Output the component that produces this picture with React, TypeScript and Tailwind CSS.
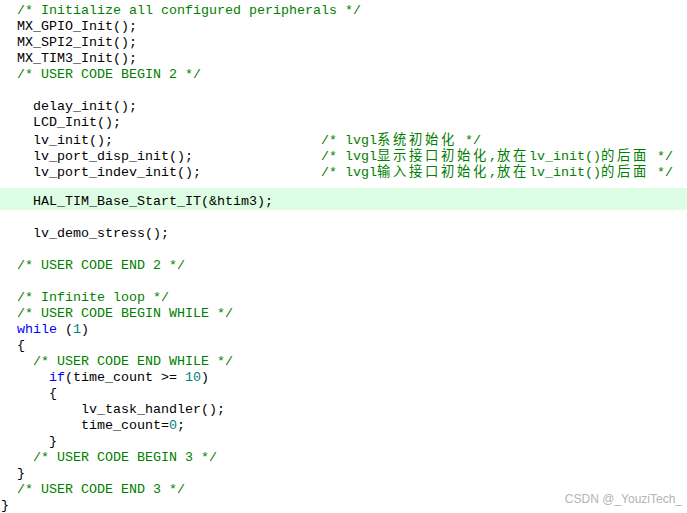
import React from "react";

type Seg = [string, "t" | "c" | "k" | "n"];

const cls: Record<string, string> = {
  t: "text-black",
  c: "text-[#008000]",
  k: "text-[#0000ff]",
  n: "text-[#008080]",
};

function renderText(s: string, key: string) {
  const parts = s.split(/([\u4e00-\u9fff]+)/);
  return parts.map((p, i) =>
    /[\u4e00-\u9fff]/.test(p) ? (
      <span
        key={key + "-" + i}
        className="tracking-[2.67px] font-['Noto_Sans_CJK_SC',sans-serif] text-[13.33px] leading-[16px]"
      >
        {p}
      </span>
    ) : (
      <React.Fragment key={key + "-" + i}>{p}</React.Fragment>
    )
  );
}

const lines: { segs: Seg[]; hl?: boolean }[] = [
  { segs: [["  ", "t"], ["/* Initialize all configured peripherals */", "c"]] },
  { segs: [["  MX_GPIO_Init();", "t"]] },
  { segs: [["  MX_SPI2_Init();", "t"]] },
  { segs: [["  MX_TIM3_Init();", "t"]] },
  { segs: [["  ", "t"], ["/* USER CODE BEGIN 2 */", "c"]] },
  { segs: [] },
  { segs: [["    delay_init();", "t"]] },
  { segs: [["    LCD_Init();", "t"]] },
  { segs: [["    lv_init();                          ", "t"], ["/* lvgl系统初始化 */", "c"]] },
  { segs: [["    lv_port_disp_init();                ", "t"], ["/* lvgl显示接口初始化,放在lv_init()的后面 */", "c"]] },
  { segs: [["    lv_port_indev_init();               ", "t"], ["/* lvgl输入接口初始化,放在lv_init()的后面 */", "c"]] },
  { segs: [] },
  { segs: [["    HAL_TIM_Base_Start_IT(&htim3);", "t"]], hl: true },
  { segs: [] },
  { segs: [["    lv_demo_stress();", "t"]] },
  { segs: [] },
  { segs: [["  ", "t"], ["/* USER CODE END 2 */", "c"]] },
  { segs: [] },
  { segs: [["  ", "t"], ["/* Infinite loop */", "c"]] },
  { segs: [["  ", "t"], ["/* USER CODE BEGIN WHILE */", "c"]] },
  { segs: [["  ", "t"], ["while", "k"], [" (", "t"], ["1", "n"], [")", "t"]] },
  { segs: [["  {", "t"]] },
  { segs: [["    ", "t"], ["/* USER CODE END WHILE */", "c"]] },
  { segs: [["      ", "t"], ["if", "k"], ["(time_count >= ", "t"], ["10", "n"], [")", "t"]] },
  { segs: [["      {", "t"]] },
  { segs: [["          lv_task_handler();", "t"]] },
  { segs: [["          time_count=", "t"], ["0", "n"], [";", "t"]] },
  { segs: [["      }", "t"]] },
  { segs: [["    ", "t"], ["/* USER CODE BEGIN 3 */", "c"]] },
  { segs: [["  }", "t"]] },
  { segs: [["  ", "t"], ["/* USER CODE END 3 */", "c"]] },
  { segs: [["}", "t"]] },
];

export default function App() {
  return (
    <div className="relative w-[687px] h-[513px] overflow-hidden bg-white">
      <div className="flex flex-col pt-[3px] font-['Liberation_Mono','Courier_New',monospace] text-[13.33px] leading-[16px] whitespace-pre">
        {lines.map((l, i) => {
          const nextHl = lines[i + 1]?.hl;
          return (
            <div
              key={i}
              className={
                l.hl
                  ? "h-[22px] pt-[6px] pl-[1px] bg-[#ddfde4]"
                  : nextHl
                  ? "h-[9px] pl-[1px]"
                  : "h-[16px] pl-[1px]"
              }
            >
              {l.segs.map((s, j) => (
                <span key={j} className={cls[s[1]]}>
                  {renderText(s[0], i + "-" + j)}
                </span>
              ))}
            </div>
          );
        })}
      </div>
      <div className="absolute right-[5px] bottom-[7px] font-['Liberation_Sans',Arial,sans-serif] text-[12px] leading-[14px] text-[#b4b4b4]">
        CSDN @_YouziTech_
      </div>
    </div>
  );
}
